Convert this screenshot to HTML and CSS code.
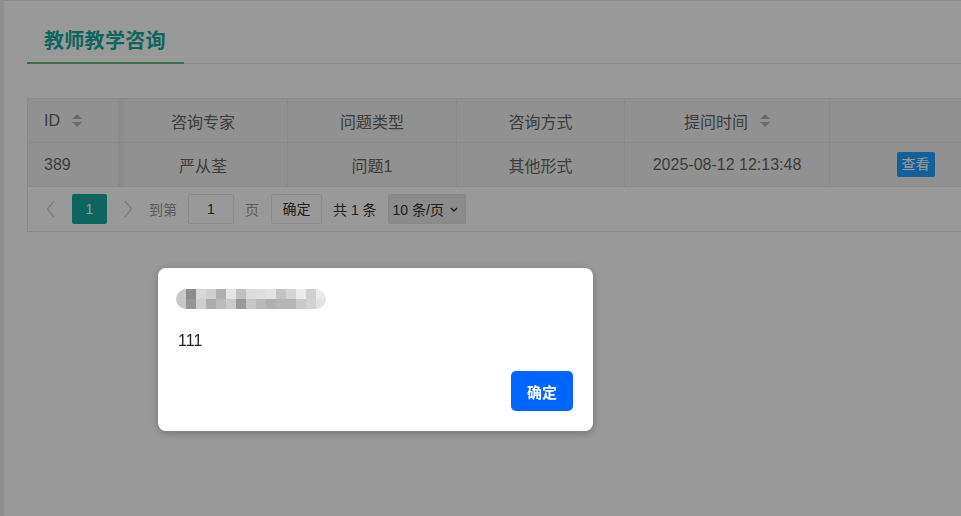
FILE: index.html
```html
<!DOCTYPE html>
<html>
<head>
    <meta charset="UTF-8">
    <meta name="viewport" content="width=device-width, initial-scale=1.0">
    <title>教师教学咨询</title>
    <link rel="stylesheet" href="styles.css">
</head>
<body>
    <div class="page">
        <ul class="tab-title">
            <li class="tab-this">教师教学咨询</li>
        </ul>

        <div class="table-box">
            <div class="row head">
                <div class="cell left">ID <span class="sort"><i class="up"></i><i class="down"></i></span></div>
                <div class="cell fixed-edge">咨询专家</div>
                <div class="cell">问题类型</div>
                <div class="cell">咨询方式</div>
                <div class="cell">提问时间 <span class="sort"><i class="up"></i><i class="down"></i></span></div>
                <div class="cell"></div>
            </div>
            <div class="row">
                <div class="cell left">389</div>
                <div class="cell fixed-edge">严从荃</div>
                <div class="cell">问题1</div>
                <div class="cell">其他形式</div>
                <div class="cell">2025-08-12 12:13:48</div>
                <div class="cell"><a href="#" class="btn-view">查看</a></div>
            </div>
            <div class="pager">
                <span class="pg-arrow">
                    <svg width="10" height="18" viewBox="0 0 10 18"><polyline points="8,1 1.5,9 8,17" fill="none" stroke="#d2d2d2" stroke-width="1.3"/></svg>
                </span>
                <span class="pg-curr">1</span>
                <span class="pg-arrow next">
                    <svg width="10" height="18" viewBox="0 0 10 18"><polyline points="2,1 8.5,9 2,17" fill="none" stroke="#d2d2d2" stroke-width="1.3"/></svg>
                </span>
                <span class="pg-skip">到第</span>
                <span class="pg-input">1</span>
                <span class="pg-skip page-word">页</span>
                <span class="pg-btn">确定</span>
                <span class="pg-count">共 1 条</span>
                <span class="pg-limit">10 条/页
                    <svg width="8" height="5" viewBox="0 0 8 5"><polyline points="1,1 4,4 7,1" fill="none" stroke="#333" stroke-width="1.4"/></svg>
                </span>
            </div>
        </div>
    </div>

    <div class="shade">
        <div class="dialog">
            <div class="mosaic">
                <i style="background:#c8c8c8"></i><i style="background:#8c8c8c"></i><i style="background:#d8d8d8"></i><i style="background:#cfcfcf"></i><i style="background:#b0b0b0"></i><i style="background:#e4e4e4"></i><i style="background:#bfbfbf"></i><i style="background:#dcdcdc"></i><i style="background:#dedede"></i><i style="background:#e2e2e2"></i><i style="background:#c4c4c4"></i><i style="background:#d4d4d4"></i><i style="background:#ececec"></i><i style="background:#cfcfcf"></i><i style="background:#eaeaea"></i>
                <i style="background:#c9c9c9"></i><i style="background:#969696"></i><i style="background:#cecece"></i><i style="background:#ababab"></i><i style="background:#bababa"></i><i style="background:#c9c9c9"></i><i style="background:#999999"></i><i style="background:#c6c6c6"></i><i style="background:#b9b9b9"></i><i style="background:#b0b0b0"></i><i style="background:#b6b6b6"></i><i style="background:#b5b5b5"></i><i style="background:#cacaca"></i><i style="background:#d2d2d2"></i><i style="background:#e3e3e3"></i>
            </div>
            <div class="dialog-msg">111</div>
            <div class="dialog-foot">
                <button class="dialog-ok">确定</button>
            </div>
        </div>
    </div>
</body>
</html>
```

FILE: styles.css
```css
:root {
    --teal: #15aa9c;
    --green: #5FB878;
    --line: #e6e6e6;
}
* {
    box-sizing: border-box;
}
body {
    margin: 0;
    height: 516px;
    overflow: hidden;
    background: #fff;
    border-left: 4px solid #f0f0f0;
    border-top: 1px solid #e8e8e8;
    font-family: "Liberation Sans", "Noto Sans CJK SC", sans-serif;
    color: #666;
}
.page {
    padding: 20px 0 0 23px;
}

/* tab */
.tab-title {
    list-style: none;
    margin: 0;
    padding: 0;
    height: 43px;
    display: flex;
    border-bottom: 1px solid var(--line);
}
.tab-this {
    height: 43px;
    padding: 0 18px 0 17px;
    line-height: 41px;
    font-size: 20px;
    font-weight: bold;
    letter-spacing: 0.3px;
    color: var(--teal);
    border-bottom: 2px solid var(--green);
}

/* table */
.table-box {
    margin-top: 34px;
    width: 976px;
    border: 1px solid var(--line);
}
.row {
    display: grid;
    grid-template-columns: 91px 169px 169px 168px 205px 172px;
    height: 44px;
    background: #f2f2f2;
    border-bottom: 1px solid var(--line);
}
.cell {
    display: flex;
    align-items: center;
    justify-content: center;
    border-right: 1px solid var(--line);
    font-size: 16px;
    color: #666;
    white-space: nowrap;
}
.cell.left {
    justify-content: flex-start;
    padding-left: 16px;
}
.fixed-edge {
    background: linear-gradient(to right, rgba(0, 0, 0, 0.04), rgba(0, 0, 0, 0) 8px);
}
.sort {
    display: inline-flex;
    flex-direction: column;
    gap: 3px;
    margin-left: 12px;
}
.sort i {
    width: 0;
    height: 0;
    border-left: 5px solid transparent;
    border-right: 5px solid transparent;
}
.sort .up {
    border-bottom: 5px solid #b2b2b2;
}
.sort .down {
    border-top: 5px solid #b2b2b2;
}
.btn-view {
    display: inline-block;
    height: 25px;
    line-height: 25px;
    padding: 0 5px;
    background: #1E9FFF;
    color: #fff;
    border-radius: 2px;
    font-size: 14px;
    text-decoration: none;
}

/* pager */
.pager {
    height: 44px;
    display: flex;
    align-items: center;
    padding-left: 10px;
    font-size: 14px;
    color: #333;
}
.pg-arrow {
    width: 26px;
    height: 30px;
    display: flex;
    align-items: center;
    justify-content: center;
}
.pg-arrow.next {
    margin-left: 8px;
}
.pg-curr {
    margin-left: 8px;
    width: 35px;
    height: 30px;
    line-height: 30px;
    text-align: center;
    background: var(--teal);
    color: #fff;
    border-radius: 2px;
}
.pg-skip {
    margin-left: 8px;
    color: #999;
}
.pg-input {
    margin-left: 11px;
    width: 46px;
    height: 30px;
    line-height: 28px;
    text-align: center;
    border: 1px solid var(--line);
    border-radius: 2px;
    background: #fff;
    color: #333;
}
.page-word {
    margin-left: 11px;
}
.pg-btn {
    margin-left: 12px;
    width: 51px;
    height: 30px;
    line-height: 28px;
    text-align: center;
    border: 1px solid var(--line);
    border-radius: 2px;
    background: #fff;
    font-size: 14px;
}
.pg-count {
    margin-left: 11px;
}
.pg-limit {
    margin-left: 11px;
    width: 78px;
    height: 30px;
    display: flex;
    align-items: center;
    justify-content: space-between;
    padding: 0 7px 0 4px;
    background: #e8e8e8;
    border: 1px solid #e2e2e2;
    border-radius: 2px;
    font-size: 14px;
}

/* alert */
.shade {
    position: fixed;
    inset: 0;
    background: rgba(0, 0, 0, 0.4);
}
.dialog {
    position: absolute;
    left: 158px;
    top: 268px;
    width: 435px;
    height: 163px;
    padding: 21px 20px 20px 18px;
    background: #fff;
    border-radius: 8px;
    box-shadow: 0 2px 8px rgba(0, 0, 0, 0.25);
}
.mosaic {
    width: 150px;
    display: flex;
    flex-wrap: wrap;
    border-radius: 10px;
    overflow: hidden;
}
.mosaic i {
    width: 10px;
    height: 10px;
}
.dialog-msg {
    margin-top: 22px;
    padding-left: 2px;
    font-size: 16px;
    line-height: 20px;
    color: #1f1f1f;
}
.dialog-foot {
    margin-top: 20px;
    display: flex;
    justify-content: flex-end;
}
.dialog-ok {
    width: 62px;
    height: 40px;
    border: none;
    border-radius: 5px;
    background: #0066ff;
    color: #fff;
    font-family: "Liberation Sans", "Noto Sans CJK SC", sans-serif;
    font-size: 15px;
    font-weight: bold;
}
```
